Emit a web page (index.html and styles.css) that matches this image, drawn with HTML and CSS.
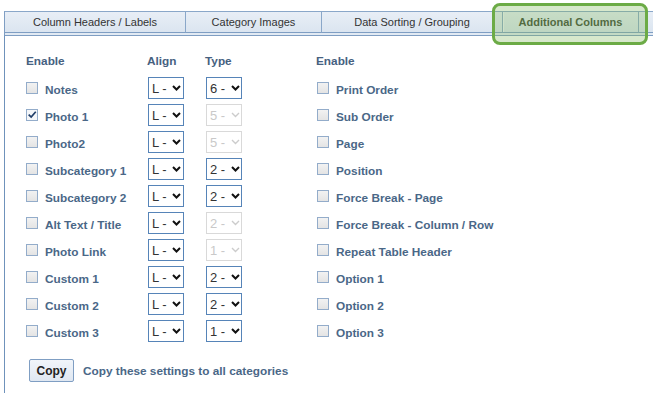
FILE: index.html
```html
<!DOCTYPE html>
<html lang="en">
  <head>
    <meta charset="UTF-8" />
    <title>Additional Columns</title>
    <link rel="stylesheet" href="styles.css">
  </head>
  <body>
    <div class="tabs">
      <div class="tab tab-wide">Column Headers / Labels</div>
      <div class="tab tab-narrow">Category Images</div>
      <div class="tab tab-wide">Data Sorting / Grouping</div>
      <div class="tab tab-narrow active">Additional Columns</div>
      <div class="tab tab-stub"></div>
      <!-- green callout around the active tab -->
      <div class="highlight"></div>
    </div>

    <div class="panel">
      <div class="grid">
        <div class="head">Enable</div>
        <div class="head">Align</div>
        <div class="head">Type</div>
        <div class="head">Enable</div>

        <label class="check"><span class="box"></span>Notes</label>
        <div class="select">L - <svg class="chev" viewBox="0 0 9 6"><path d="M1 1 L4.5 4.5 L8 1" /></svg></div>
        <div class="select">6 - <svg class="chev" viewBox="0 0 9 6"><path d="M1 1 L4.5 4.5 L8 1" /></svg></div>
        <label class="check right"><span class="box"></span>Print Order</label>

        <label class="check"><span class="box checked"><svg viewBox="0 0 12 12"><path d="M2 5.5 L5 8.5 L10.5 2" /></svg></span>Photo 1</label>
        <div class="select">L - <svg class="chev" viewBox="0 0 9 6"><path d="M1 1 L4.5 4.5 L8 1" /></svg></div>
        <div class="select disabled">5 - <svg class="chev" viewBox="0 0 9 6"><path d="M1 1 L4.5 4.5 L8 1" /></svg></div>
        <label class="check right"><span class="box"></span>Sub Order</label>

        <label class="check"><span class="box"></span>Photo2</label>
        <div class="select">L - <svg class="chev" viewBox="0 0 9 6"><path d="M1 1 L4.5 4.5 L8 1" /></svg></div>
        <div class="select disabled">5 - <svg class="chev" viewBox="0 0 9 6"><path d="M1 1 L4.5 4.5 L8 1" /></svg></div>
        <label class="check right"><span class="box"></span>Page</label>

        <label class="check"><span class="box"></span>Subcategory 1</label>
        <div class="select">L - <svg class="chev" viewBox="0 0 9 6"><path d="M1 1 L4.5 4.5 L8 1" /></svg></div>
        <div class="select">2 - <svg class="chev" viewBox="0 0 9 6"><path d="M1 1 L4.5 4.5 L8 1" /></svg></div>
        <label class="check right"><span class="box"></span>Position</label>

        <label class="check"><span class="box"></span>Subcategory 2</label>
        <div class="select">L - <svg class="chev" viewBox="0 0 9 6"><path d="M1 1 L4.5 4.5 L8 1" /></svg></div>
        <div class="select">2 - <svg class="chev" viewBox="0 0 9 6"><path d="M1 1 L4.5 4.5 L8 1" /></svg></div>
        <label class="check right"><span class="box"></span>Force Break - Page</label>

        <label class="check"><span class="box"></span>Alt Text / Title</label>
        <div class="select">L - <svg class="chev" viewBox="0 0 9 6"><path d="M1 1 L4.5 4.5 L8 1" /></svg></div>
        <div class="select disabled">2 - <svg class="chev" viewBox="0 0 9 6"><path d="M1 1 L4.5 4.5 L8 1" /></svg></div>
        <label class="check right"><span class="box"></span>Force Break - Column / Row</label>

        <label class="check"><span class="box"></span>Photo Link</label>
        <div class="select">L - <svg class="chev" viewBox="0 0 9 6"><path d="M1 1 L4.5 4.5 L8 1" /></svg></div>
        <div class="select disabled">1 - <svg class="chev" viewBox="0 0 9 6"><path d="M1 1 L4.5 4.5 L8 1" /></svg></div>
        <label class="check right"><span class="box"></span>Repeat Table Header</label>

        <label class="check"><span class="box"></span>Custom 1</label>
        <div class="select">L - <svg class="chev" viewBox="0 0 9 6"><path d="M1 1 L4.5 4.5 L8 1" /></svg></div>
        <div class="select">2 - <svg class="chev" viewBox="0 0 9 6"><path d="M1 1 L4.5 4.5 L8 1" /></svg></div>
        <label class="check right"><span class="box"></span>Option 1</label>

        <label class="check"><span class="box"></span>Custom 2</label>
        <div class="select">L - <svg class="chev" viewBox="0 0 9 6"><path d="M1 1 L4.5 4.5 L8 1" /></svg></div>
        <div class="select">2 - <svg class="chev" viewBox="0 0 9 6"><path d="M1 1 L4.5 4.5 L8 1" /></svg></div>
        <label class="check right"><span class="box"></span>Option 2</label>

        <label class="check"><span class="box"></span>Custom 3</label>
        <div class="select">L - <svg class="chev" viewBox="0 0 9 6"><path d="M1 1 L4.5 4.5 L8 1" /></svg></div>
        <div class="select">1 - <svg class="chev" viewBox="0 0 9 6"><path d="M1 1 L4.5 4.5 L8 1" /></svg></div>
        <label class="check right"><span class="box"></span>Option 3</label>
      </div>

      <div class="copy-row">
        <button class="copy-btn">Copy</button>
        <span class="copy-text">Copy these settings to all categories</span>
      </div>
    </div>
  </body>
</html>
```

FILE: styles.css
```css
/* Global */
body {
  margin: 0;
  font-family: "Liberation Sans", Arial, sans-serif;
  background: #ffffff;
  overflow: hidden;
}

/* Tab strip */
.tabs {
  position: relative;
  display: flex;
  margin: 11px 0 0 4px;
  border-top: 1px solid #8aa7c9;
  border-left: 1px solid #7f9ec3;
  padding-bottom: 2px;
  background: #e2eaf3;
}

.tab {
  height: 20px;
  line-height: 20px;
  border-right: 1px solid #8aa7c9;
  border-bottom: 1px solid #7f9ec3;
  background: linear-gradient(#e8eef6, #dbe5f0);
  color: #333333;
  font-size: 11px;
  text-align: center;
  white-space: nowrap;
}

.tab-wide {
  width: 180px;
}

.tab-narrow {
  width: 135px;
}

.tab-stub {
  flex: 1;
  border-right: none;
}

.tab.active {
  font-weight: bold;
  color: #3b4733;
  box-shadow: inset 1px 0 0 #f4f7fb;
}

.highlight {
  position: absolute;
  left: 487px;
  top: -9px;
  width: 156px;
  height: 42px;
  box-sizing: border-box;
  border: 3px solid #6cab46;
  border-radius: 8px;
  background: rgba(130, 185, 95, 0.32);
}

/* Panel */
.panel {
  margin-left: 4px;
  border-top: 1px solid #7f9ec3;
  border-left: 1px solid #6f92bb;
  padding: 12px 0 11px 21px;
}

.grid {
  display: grid;
  grid-template-columns: 121px 58px 111px 1fr;
  grid-template-rows: 28px;
  grid-auto-rows: 27px;
  align-items: center;
}

.head {
  font-size: 11.8px;
  font-weight: bold;
  color: #46617f;
  margin-top: -3px;
}

/* Checkboxes */
.check {
  display: flex;
  align-items: center;
  font-size: 11.8px;
  font-weight: bold;
  color: #4a6787;
  white-space: nowrap;
}

.check.right {
  margin-left: 1px;
}

.box {
  width: 12px;
  height: 12px;
  box-sizing: border-box;
  margin: -3px 7px 0 0;
  border: 1px solid #93acca;
  background: linear-gradient(#f2f2f2, #e4e4e4);
  display: flex;
  align-items: center;
  justify-content: center;
}

.box.checked {
  background: #f4f6f9;
}

.box svg {
  width: 12px;
  height: 12px;
  fill: none;
  stroke: #1f3d68;
  stroke-width: 2;
}

/* Dropdowns */
.select {
  width: 36px;
  height: 22px;
  box-sizing: border-box;
  margin: -3px 0 0 1px;
  border: 1px solid #5684b8;
  background: #ffffff;
  color: #333333;
  font-size: 13px;
  display: flex;
  align-items: center;
  padding-left: 3px;
  white-space: pre;
}

.chev {
  width: 9px;
  height: 6px;
  margin-left: 2px;
  fill: none;
  stroke: #111111;
  stroke-width: 2;
}

.select.disabled {
  border-color: #d9d9d9;
  color: #c9c9c9;
}

.select.disabled .chev {
  stroke: #cccccc;
  stroke-width: 1.4;
}

/* Copy row */
.copy-row {
  display: flex;
  align-items: center;
  margin-top: 13px;
}

.copy-btn {
  margin-left: 3px;
  width: 45px;
  height: 23px;
  padding: 0;
  border: 1px solid #7f9ec3;
  border-radius: 2px;
  background: linear-gradient(#f1f5fa, #dfe7f1);
  font-family: "Liberation Sans", Arial, sans-serif;
  font-size: 12px;
  font-weight: bold;
  color: #222222;
}

.copy-text {
  margin-left: 9px;
  font-size: 11.8px;
  font-weight: bold;
  color: #4a6787;
}
```
